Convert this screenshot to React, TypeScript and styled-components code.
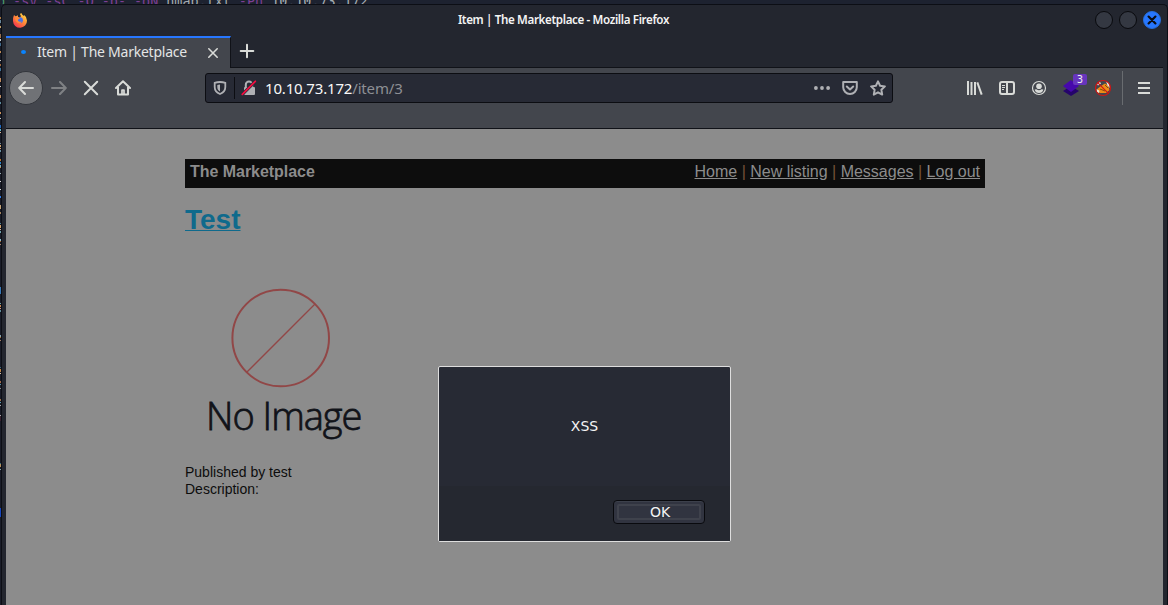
import React from "react";
import styled, { createGlobalStyle } from "styled-components";

const GlobalStyle = createGlobalStyle`
  * { box-sizing: border-box; }
  html, body { margin: 0; background: #1d202b; overflow: hidden; }
`;

const Desktop = styled.div`
  display: grid;
  grid-template-columns: 1px 1fr;
  grid-template-rows: 4px 601px;
  width: 1168px;
  height: 605px;
  overflow: hidden;
  background: #1d2230;
`;

const CommandLine = styled.div`
  grid-column: 1 / -1;
  display: flex;
  align-items: flex-end;
  height: 4px;
  overflow: hidden;
  white-space: pre;
  color: #7d3f94;
  font: 13.4px/16px "DejaVu Sans Mono", monospace;
`;
const CommandText = styled.div`
  margin: 0 0 -6px -3px;
`;
const Piece = styled.span<{ $color: string }>`
  color: ${(p) => p.$color};
`;

/* Edge of the terminal output behind the window: [top, height, colour] */
const specks: [number, number, string][] = [
  [13, 2, "#a87843"], [16, 3, "#66869a"], [22, 2, "#c4a36d"], [30, 4, "#9c704c"],
  [35, 2, "#c6cdd1"], [39, 3, "#436b8d"], [47, 2, "#bd8a55"], [56, 1, "#c8c8c8"],
  [60, 2, "#9d693d"], [64, 3, "#417498"], [74, 4, "#be895b"], [82, 1, "#d2d0cd"],
  [91, 3, "#bd8b60"], [98, 2, "#5d8b9c"], [108, 2, "#cc935a"], [114, 1, "#bbc5c8"],
  [121, 3, "#1f68bf"], [125, 2, "#64b5c9"], [128, 1, "#dfb899"],
  [139, 1, "#74899a"], [141, 2, "#d0a46c"], [144, 1, "#d5a07a"], [146, 2, "#6a92a4"],
  [155, 2, "#b77535"], [158, 2, "#2b82c9"], [161, 2, "#78aeb7"], [163, 1, "#c5854c"],
  [169, 1, "#9cafb6"], [177, 1, "#ddd"], [185, 1, "#ddd"], [192, 2, "#317ee7"],
  [201, 4, "#c6a476"], [208, 2, "#a4845f"], [219, 1, "#55869b"], [221, 3, "#d2a26b"],
  [225, 1, "#d4b2a0"], [227, 2, "#6fa2ac"], [235, 2, "#92bdd0"], [237, 1, "#a46731"],
  [240, 1, "#aa886f"], [283, 7, "#3779b8"], [299, 1, "#76a5ae"], [301, 2, "#c6864d"],
  [304, 1, "#d29484"], [306, 2, "#608e9b"], [331, 2, "#86a3ac"], [333, 1, "#a46b36"],
  [336, 1, "#a47f67"], [363, 1, "#3f6979"], [365, 3, "#bd8549"], [369, 1, "#dcc7af"],
  [377, 2, "#a06a4a"], [380, 1, "#5c94a8"], [384, 1, "#888"], [395, 2, "#9a7250"],
  [398, 1, "#5d9eb2"], [401, 1, "#aaa"], [411, 1, "#aaa"], [412, 5, "#392130"],
  [459, 1, "#42717f"], [460, 3, "#b6905c"], [465, 1, "#88a5aa"], [504, 9, "#1746bd"],
];
const stripes = specks
  .map(([y, h, c]) => `transparent ${y}px, ${c} ${y}px, ${c} ${y + h}px, transparent ${y + h}px`)
  .join(", ");
const TerminalEdge = styled.div`
  background: linear-gradient(${stripes}) #1a1d29;
`;

const Window = styled.div`
  display: flex;
  flex-direction: column;
  border: 1px solid #0c0e15;
  border-bottom: 0;
  border-radius: 5px 5px 0 0;
  padding: 0 4px;
  background: #23262f;
  overflow: hidden;
`;

const TitleBar = styled.header`
  display: grid;
  grid-template-columns: 1fr auto 1fr;
  align-items: center;
  flex: none;
  height: 31px;
  padding: 0 2px 0 6px;
`;
const Title = styled.div`
  margin: 0 46px 2px 0;
  color: #f4f4f4;
  font: 600 11.6px/16px "Noto Sans", sans-serif;
  letter-spacing: -0.36px;
  white-space: nowrap;
`;
const WindowButtons = styled.div`
  display: flex;
  justify-content: flex-end;
  gap: 6px;
  margin-left: -46px;
`;
const RoundButton = styled.div<{ $close?: boolean }>`
  display: flex;
  align-items: center;
  justify-content: center;
  width: 18px;
  height: 18px;
  margin-top: -1px;
  border: 1px solid ${(p) => (p.$close ? "#286ed8" : "#08090d")};
  border-radius: 50%;
  background: ${(p) => (p.$close ? "#2777ff" : "#343842")};
`;

const TabStrip = styled.div`
  display: flex;
  flex: none;
  height: 32px;
`;
const Tab = styled.div`
  display: flex;
  align-items: center;
  width: 225px;
  border-top: 2px solid #2777ff;
  border-right: 1px solid #101218;
  background: #43464d;
  color: #e3e5e5;
  font: 14px/20px "Noto Sans", sans-serif;
  letter-spacing: -0.24px;
`;
const LoadingDot = styled.i`
  width: 5px;
  height: 4px;
  margin: 0 11px 2px 15px;
  border-radius: 50%;
  background: #0a84ff;
`;
const TabLabel = styled.span`
  width: 168px;
  padding-bottom: 3px;
  white-space: nowrap;
`;
const StripRest = styled.div`
  display: flex;
  align-items: center;
  flex: 1;
  padding: 0 0 2px 8px;
  border-bottom: 1px solid #101218;
`;

const Toolbar = styled.nav`
  display: flex;
  flex: none;
  height: 61px;
  border-bottom: 1px solid #101218;
  background: #43464d;
`;
const NavButtons = styled.div`
  display: flex;
  align-items: center;
  width: 199px;
  height: 40px;
  padding-left: 3px;
`;
const BackButton = styled.div`
  display: flex;
  align-items: center;
  justify-content: center;
  width: 34px;
  height: 34px;
  border: 1px solid #33363c;
  border-radius: 50%;
  background: #707276;
`;
const NavIcon = styled.div<{ $dim?: boolean }>`
  display: flex;
  justify-content: center;
  width: 32px;
  opacity: ${(p) => (p.$dim ? 0.4 : 1)};
`;
const AddressBar = styled.div`
  display: flex;
  align-items: center;
  width: 688px;
  height: 30px;
  margin-top: 5px;
  padding: 0 6px;
  border: 1px solid #0c0d12;
  border-radius: 3px;
  background: #272a35;
`;
const Separator = styled.i<{ $tall?: boolean }>`
  flex: none;
  width: 1px;
  height: ${(p) => (p.$tall ? 34 : 22)}px;
  margin: 0 ${(p) => (p.$tall ? 15 : 6)}px 0 ${(p) => (p.$tall ? 3 : 6)}px;
  background: ${(p) => (p.$tall ? "#696c70" : "#0c0d12")};
`;
const Address = styled.div`
  flex: 1;
  margin-left: 8px;
  color: #f8f8f8;
  font: 15px/20px "Noto Sans", sans-serif;
  letter-spacing: -0.17px;
`;
const Path = styled.span`
  color: #8d8f94;
`;
const AddressActions = styled.div`
  display: flex;
  align-items: center;
  gap: 12px;
`;
const ToolIcons = styled.div`
  display: flex;
  align-items: center;
  justify-content: flex-end;
  flex: 1;
  height: 38px;
  padding-right: 13px;
  margin-top: 1px;
`;
const Tool = styled.div`
  position: relative;
  display: flex;
  justify-content: center;
  width: 32px;
`;
const Badge = styled.span`
  position: absolute;
  left: 18px;
  top: -5px;
  width: 14px;
  height: 11px;
  border-radius: 2px;
  background: #6735bd;
  color: #eee;
  font: 10px/11px "DejaVu Sans", sans-serif;
  text-align: center;
`;

const Page = styled.main`
  flex: 1;
  width: 1157px;
  padding: 30px 178px 0 179px;
  background: #8c8c8c;
  color: #0d0d0d;
  font: 14px/17px "Liberation Sans", Arial, sans-serif;
`;
const SiteHeader = styled.div`
  display: flex;
  justify-content: space-between;
  height: 29px;
  padding: 3px 5px;
  background: #0d0d0d;
  color: #8c8c8c;
  font-size: 16px;
  line-height: 19px;
`;
const SiteName = styled.strong`
  letter-spacing: -0.04px;
`;
const SiteLinks = styled.div`
  color: #755138;
`;
const SiteLink = styled.a`
  color: #8c8c8c;
  text-decoration: underline;
`;
const Heading = styled.h1`
  margin: 15px 0 0;
  color: #0f6a8c;
  font-size: 28px;
  line-height: 34px;
  text-decoration: underline;
  text-decoration-thickness: 1px;
`;
const Placeholder = styled.figure`
  display: flex;
  flex-direction: column;
  width: 200px;
  height: 200px;
  margin: 27px 0 0;
  padding: 24px 0 0 46px;
`;
const Caption = styled.figcaption`
  margin: 0 0 0 -25px;
  color: #111319;
  font: 300 38px/54px "Open Sans", "Noto Sans", sans-serif;
  letter-spacing: -1px;
  -webkit-text-stroke: 0.8px #111319;
  white-space: nowrap;
`;

const Dialog = styled.div`
  position: absolute;
  left: 438px;
  top: 366px;
  display: flex;
  flex-direction: column;
  width: 293px;
  height: 176px;
  border: 1px solid #dedede;
  border-radius: 2px;
  background: #272a34;
  color: #f4f4f4;
  font: 14px/18px "DejaVu Sans", sans-serif;
`;
const Message = styled.div`
  display: flex;
  align-items: center;
  justify-content: center;
  height: 119px;
  padding-bottom: 2px;
`;
const DialogActions = styled.div`
  display: flex;
  flex: 1;
  justify-content: flex-end;
  padding: 14px 25px 0 0;
  background: #252830;
`;
const OkButton = styled.button`
  width: 92px;
  height: 24px;
  padding: 3px;
  border: 1px solid #090a0e;
  border-radius: 4px;
  background: #313440;
  box-shadow: inset 0 1px #3c404b;
  color: #f4f4f4;
  font: 14px/14px "DejaVu Sans", sans-serif;
`;
const FocusRing = styled.span`
  display: block;
  height: 16px;
  padding-left: 2px;
  border: 2px solid #3f424c;
  border-radius: 2px;
  line-height: 12px;
`;

const light = "#d9dbd8";
const gray = "#afb0b4";

const Stroke = ({ d, size = 16, color = light, width = 2 }: { d: string; size?: number; color?: string; width?: number }) => (
  <svg width={size} height={size} viewBox="0 0 16 16" fill="none" stroke={color} strokeWidth={width} strokeLinecap="round" strokeLinejoin="round">
    <path d={d} />
  </svg>
);

const FirefoxLogo = () => (
  <svg width="16" height="16" viewBox="0 0 16 16">
    <defs>
      <linearGradient id="flame" x1="1" y1="0" x2=".25" y2="1">
        <stop offset="0" stopColor="#fff04b" />
        <stop offset=".45" stopColor="#ff9838" />
        <stop offset="1" stopColor="#f5344f" />
      </linearGradient>
    </defs>
    <path fill="url(#flame)" d="M2 2 3.5 3.2 5 2.8 6 2.2 6 4 8 4.5 9 3Q7 1 9.3 0Q10 2 12 3L12.2 2Q15 4 15 7.5A7 7 0 0 1 1 8Q.8 4.5 2 2Z" />
    <circle cx="8" cy="7.2" r="2.9" fill="#4670e8" />
    <path fill="#ff8a36" d="M3 4.4 6 4 8 5.5 6 6.5Q5.5 7.8 7 8.5Q8.5 9 10 8.5Q8.5 11 5.4 9.7 3 8 3 4.4Z" />
  </svg>
);
const HomeIcon = () => (
  <svg width="16" height="16" viewBox="0 0 16 16" fill="none" stroke={light} strokeWidth="2" strokeLinejoin="round" strokeLinecap="round">
    <path d="M1 8 8 1.2 15 8M3 7v7.5h10V7" />
    <path d="M7 14v-4h2v4" strokeWidth="1.7" />
  </svg>
);
const ShieldIcon = () => (
  <svg width="16" height="16" viewBox="0 0 16 16">
    <path d="M8 2C6 2 4 2.4 2.7 2.9V7c0 3.6 2.3 5.8 5.3 7 3-1.2 5.3-3.4 5.3-7V2.9C12 2.4 10 2 8 2Z" fill="none" stroke={gray} strokeWidth="1.8" />
    <path d="M8 4.5C6.8 4.6 6 4.8 5.3 5v2c0 2 .9 3.6 2.7 4.6Z" fill={gray} />
  </svg>
);
const LockIcon = () => (
  <svg width="16" height="16" viewBox="0 0 16 16">
    <path d="M4.8 7V4.8a3.2 3.2 0 0 1 6.4 0V7" fill="none" stroke={gray} strokeWidth="2" />
    <rect x="3" y="7" width="11" height="8" rx="1" fill={gray} />
    <path d="M1.3 14.3 14.3 1.3" stroke="#272a35" strokeWidth="3.2" />
    <path d="M1.3 14.3 14.3 1.3" stroke="#f50b3f" strokeWidth="1.8" strokeLinecap="round" />
  </svg>
);
const DotsIcon = () => (
  <svg width="16" height="16" viewBox="0 0 16 16" fill={gray}>
    <circle cx="1.9" cy="8" r="1.9" /><circle cx="8" cy="8" r="1.9" /><circle cx="14.1" cy="8" r="1.9" />
  </svg>
);
const PocketIcon = () => (
  <svg width="16" height="16" viewBox="0 0 16 16" fill="none" stroke={gray} strokeWidth="2" strokeLinejoin="round" strokeLinecap="round">
    <path d="M1.2 2h13.6v5.2a6.8 6.8 0 0 1-13.6 0Z" /><path d="m4.8 6.5 3.2 3 3.2-3" />
  </svg>
);
const LibraryIcon = () => (
  <svg width="16" height="16" viewBox="0 0 16 16" fill="none" stroke={light} strokeWidth="2">
    <path d="M1 1v14M4.5 2v13M8 2v13" /><path d="m10.3 2.3 4.4 12.4" />
  </svg>
);
const SidebarIcon = () => (
  <svg width="16" height="16" viewBox="0 0 16 16" fill="none" stroke={light}>
    <rect x="1" y="2" width="14" height="12" rx="2" strokeWidth="2" />
    <path d="M8 2v12" strokeWidth="2" /><path d="M3 5.5h3M3 7.5h3M3 9.5h2" />
  </svg>
);
const AccountIcon = () => (
  <svg width="16" height="16" viewBox="0 0 16 16">
    <circle cx="8" cy="8" r="6.5" fill="none" stroke={light} strokeWidth="1.2" />
    <circle cx="8" cy="6.3" r="2.8" fill={light} />
    <path d="M3.6 9.5 5.5 9.3Q8 11.2 10.5 9.3L12.4 9.5Q11.5 13 8 13T3.6 9.5Z" fill={light} />
  </svg>
);
const LayersIcon = () => (
  <svg width="18" height="18" viewBox="0 0 18 18">
    <path fill="#25046b" d="m1 12 8-5 8 5-8 5Z" />
    <path fill="#4608ac" d="m1 7 8-6 8 6-8 6Z" />
  </svg>
);
const ProxyIcon = () => (
  <svg width="18" height="18" viewBox="0 0 18 18">
    <path fill="#ee8c17" d="M3.8 9.5 7 7 11 4.5 14 6.5 15.5 11 12 14 6 14 2.5 12Z" />
    <path fill="#eee8dc" d="M12 2.3 15 4 16 9 13.5 6.5ZM2.5 10l3 1.7L5 14 3 13ZM3 5l3-2 1 1.5-3 2Z" />
    <path d="m6 10 5 2m0-6 3 3" stroke="#854910" />
    <g fill="none" stroke="#cf1515" strokeWidth="1.2"><circle cx="9" cy="9" r="7.5" /><path d="m3.7 3.7 10.6 10.6" /></g>
  </svg>
);
const MenuIcon = () => (
  <svg width="12" height="12" viewBox="0 0 12 12" fill={light}>
    <path d="M0 0h12v2H0zM0 5h12v2H0zM0 10h12v2H0z" />
  </svg>
);

export default function App() {
  return (
    <>
      <GlobalStyle />
      <Desktop>
        <CommandLine>
          <CommandText>
            <Piece $color="#4b9b69">p</Piece> -sV -sC -O -p- -oN <Piece $color="#a5adb0">nmap.txt</Piece> -Pn <Piece $color="#a5adb0">10.10.73.172</Piece>
          </CommandText>
        </CommandLine>
        <TerminalEdge />
        <Window>
          <TitleBar>
            <FirefoxLogo />
            <Title>Item | The Marketplace - Mozilla Firefox</Title>
            <WindowButtons>
              <RoundButton />
              <RoundButton />
              <RoundButton $close>
                <Stroke size={10} color="#0b0d13" width={3.5} d="M2.5 2.5 13.5 13.5M13.5 2.5 2.5 13.5" />
              </RoundButton>
            </WindowButtons>
          </TitleBar>
          <TabStrip>
            <Tab>
              <LoadingDot />
              <TabLabel>Item | The Marketplace</TabLabel>
              <Stroke d="M3.8 3.8 12.2 12.2M12.2 3.8 3.8 12.2" width={1.6} />
            </Tab>
            <StripRest>
              <Stroke d="M8 1.7V14.3M1.7 8H14.3" />
            </StripRest>
          </TabStrip>
          <Toolbar>
            <NavButtons>
              <BackButton><Stroke d="M15 8H1.5M7 2 1.2 8 7 14" /></BackButton>
              <NavIcon $dim><Stroke d="M1 8h13.5M9 2l5.8 6L9 14" /></NavIcon>
              <NavIcon><Stroke d="M1.8 1.8 14.2 14.2M14.2 1.8 1.8 14.2" /></NavIcon>
              <NavIcon><HomeIcon /></NavIcon>
            </NavButtons>
            <AddressBar>
              <ShieldIcon />
              <Separator />
              <LockIcon />
              <Address>10.10.73.172<Path>/item/3</Path></Address>
              <AddressActions>
                <DotsIcon />
                <PocketIcon />
                <Stroke color={gray} d="m8 1.4 2.1 4.3 4.8.7-3.5 3.4.8 4.8L8 12.3l-4.2 2.3.8-4.8L1.1 6.4l4.8-.7Z" />
              </AddressActions>
            </AddressBar>
            <ToolIcons>
              <Tool><LibraryIcon /></Tool>
              <Tool><SidebarIcon /></Tool>
              <Tool><AccountIcon /></Tool>
              <Tool><LayersIcon /><Badge>3</Badge></Tool>
              <Tool><ProxyIcon /></Tool>
              <Separator $tall />
              <MenuIcon />
            </ToolIcons>
          </Toolbar>
          <Page>
            <SiteHeader>
              <SiteName>The Marketplace</SiteName>
              <SiteLinks>
                <SiteLink>Home</SiteLink> | <SiteLink>New listing</SiteLink> | <SiteLink>Messages</SiteLink> | <SiteLink>Log out</SiteLink>
              </SiteLinks>
            </SiteHeader>
            <Heading>Test</Heading>
            <Placeholder>
              <svg width="100" height="100" viewBox="0 0 100 100" fill="none" stroke="#914747">
                <circle cx="49.7" cy="50" r="48.3" strokeWidth="2" />
                <path d="M16 84 84 16" strokeWidth="1.3" />
              </svg>
              <Caption>No Image</Caption>
            </Placeholder>
            <div>Published by test</div>
            <div>Description:</div>
          </Page>
        </Window>
      </Desktop>
      <Dialog role="dialog">
        <Message>XSS</Message>
        <DialogActions>
          <OkButton><FocusRing>OK</FocusRing></OkButton>
        </DialogActions>
      </Dialog>
    </>
  );
}
